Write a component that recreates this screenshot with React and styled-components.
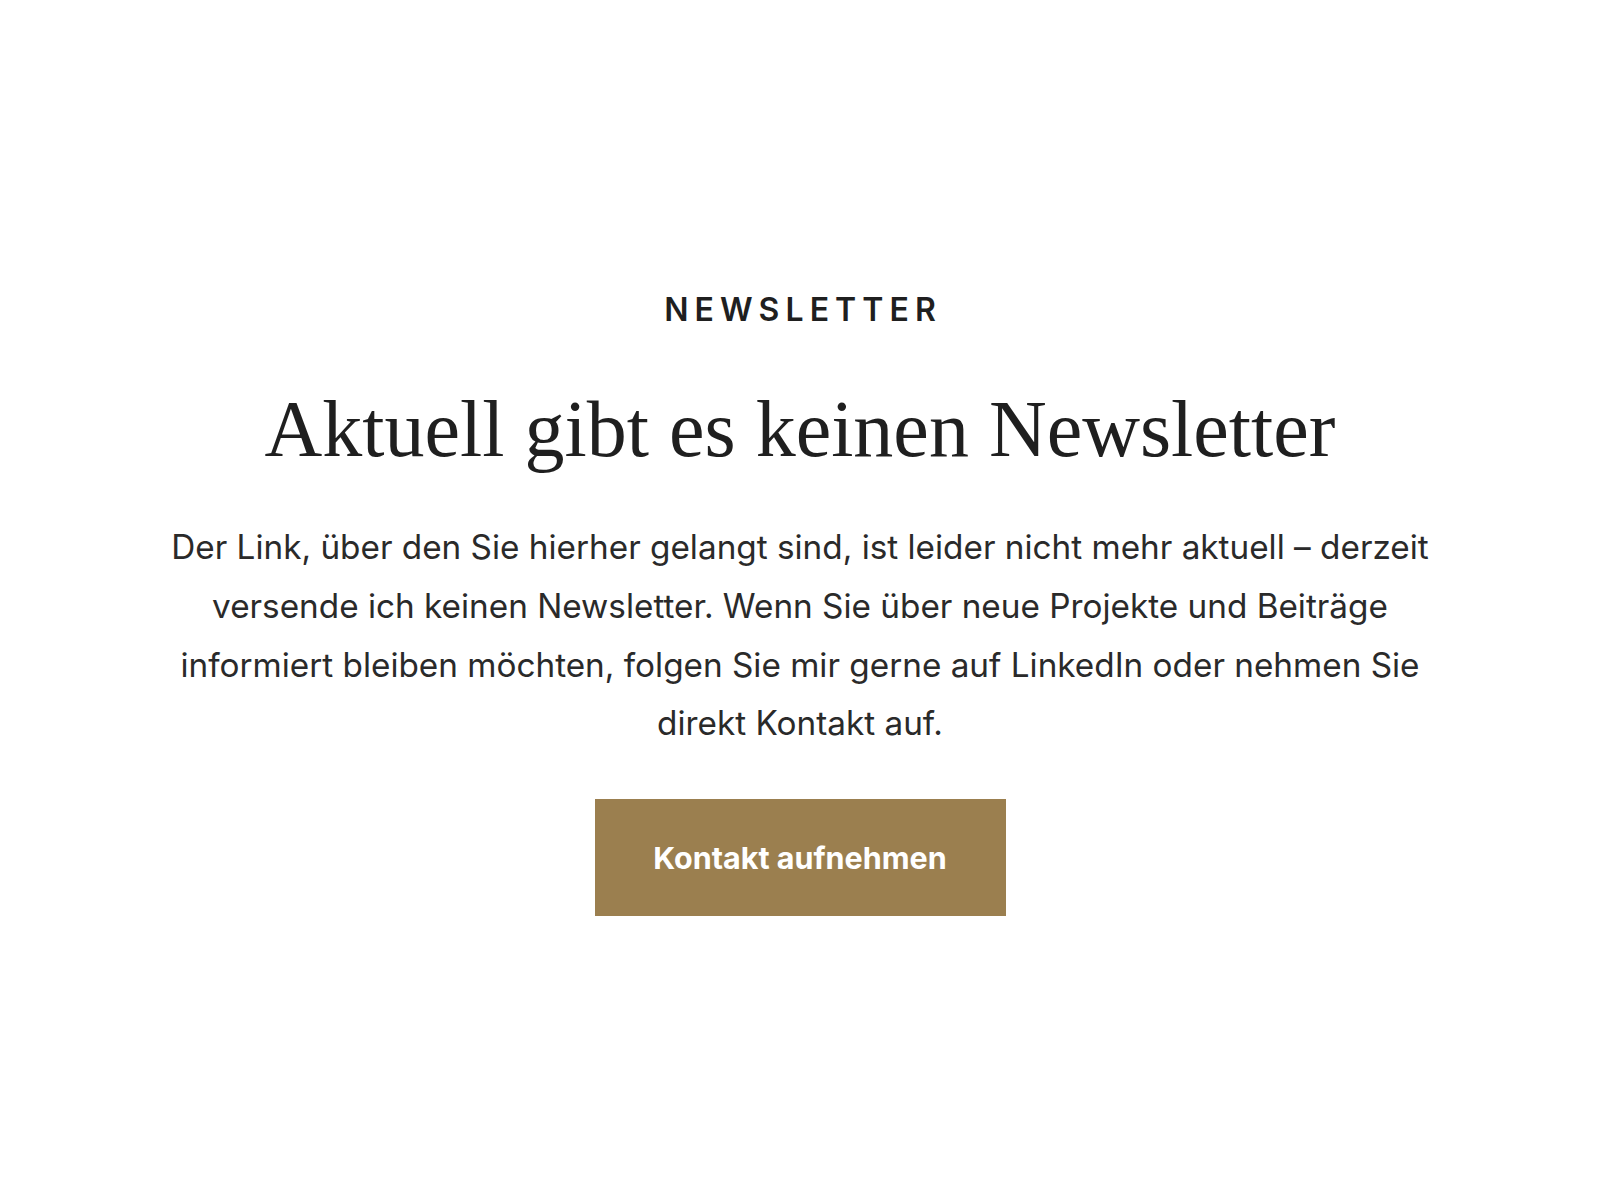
import React from "react";
import styled, { createGlobalStyle } from "styled-components";

const GlobalStyle = createGlobalStyle`
  html, body {
    margin: 0;
    padding: 0;
    background: #ffffff;
  }
  body {
    font-family: Inter, "Noto Sans", sans-serif;
    color: #222222;
  }
`;

export default function App() {
  return (
    <>
      <GlobalStyle />
      <Page>
        <Section>
          <Eyebrow>Newsletter</Eyebrow>
          <Title>Aktuell gibt es keinen Newsletter</Title>
          <Text>
            Der Link, über den Sie hierher gelangt sind, ist leider nicht mehr
            aktuell – derzeit versende ich keinen Newsletter. Wenn Sie über neue
            Projekte und Beiträge informiert bleiben möchten, folgen Sie mir
            gerne auf LinkedIn oder nehmen Sie direkt Kontakt auf.
          </Text>
          <Button href="#kontakt">Kontakt aufnehmen</Button>
        </Section>
      </Page>
    </>
  );
}

const Page = styled.main`
  min-height: 100vh;
  display: flex;
  justify-content: center;
  align-items: flex-start;
  box-sizing: border-box;
  padding-top: 291px;
`;

const Section = styled.section`
  display: flex;
  flex-direction: column;
  align-items: center;
  text-align: center;
  width: 1300px;
`;

const Eyebrow = styled.div`
  font-family: Inter, sans-serif;
  font-size: 32px;
  font-weight: 600;
  letter-spacing: 0.19em;
  text-transform: uppercase;
  color: #1f1f1f;
  line-height: 1.2;
  padding-left: 0.19em;
`;

const Title = styled.h1`
  margin: 52px 0 0;
  font-family: "Liberation Serif", serif;
  font-weight: 400;
  font-size: 80px;
  line-height: 1.2;
  color: #1f1f1f;
`;

const Text = styled.p`
  margin: 41px 0 0;
  font-family: Inter, sans-serif;
  font-size: 33.3px;
  line-height: 1.76;
  color: #2a2a2a;
`;

const Button = styled.a`
  margin-top: 46px;
  display: inline-flex;
  align-items: center;
  justify-content: center;
  width: 411px;
  height: 117px;
  box-sizing: border-box;
  background: #9b7f4f;
  color: #ffffff;
  font-family: Inter, sans-serif;
  font-size: 30.5px;
  font-weight: 700;
  text-decoration: none;
`;
